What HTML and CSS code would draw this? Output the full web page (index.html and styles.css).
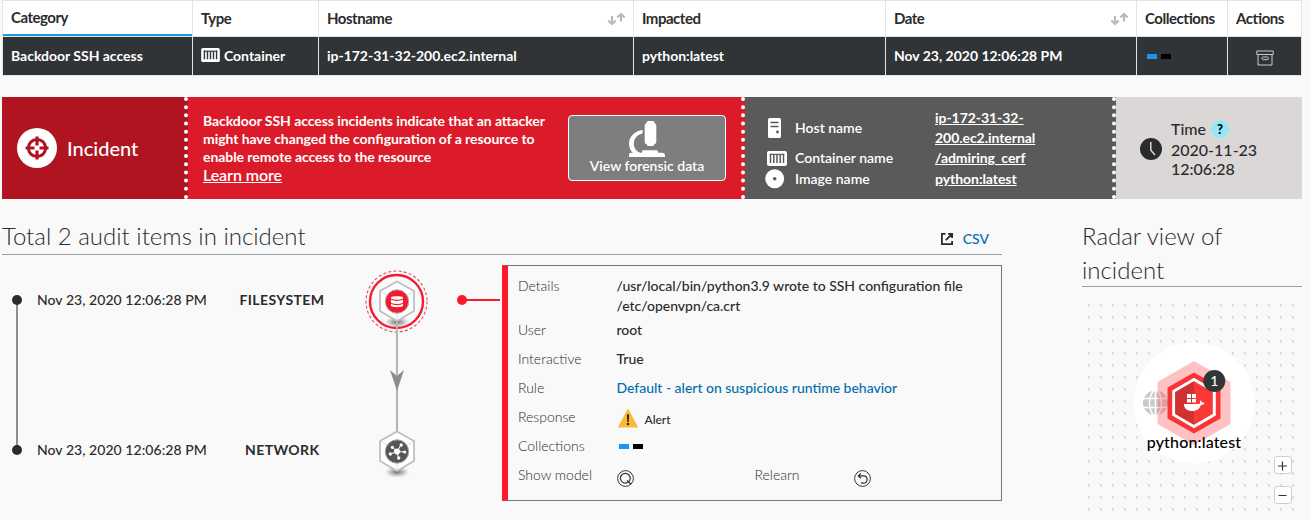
FILE: index.html
```html
<!DOCTYPE html>
<html lang="en">
<head>
<meta charset="utf-8">
<title>Incident</title>
<link rel="stylesheet" href="styles.css">
</head>
<body>
<svg class="defs" width="0" height="0">
  <symbol id="container" viewBox="0 0 20 15">
    <rect x="0" y="0" width="20" height="15" rx="2" fill="#fff"/>
    <path d="M3.500 2.700V12M6.800 3.200V12M10 3.200V12M13.200 3.200V12M16.500 2.700V12" stroke="currentColor" stroke-width="1.500"/>
    <path d="M2.800 3.400H17.200" stroke="currentColor" stroke-width="1.200"/>
  </symbol>
  <symbol id="sort" viewBox="0 0 18 14">
    <path d="M5 4V12M1.300 8.500L5 12L8.700 8.500M14 9.500V2M10.300 5.500L14 2L17.700 5.500" fill="none" stroke="#b9b9b9" stroke-width="2.200"/>
  </symbol>
</svg>

<div class="table">
  <div class="th sorted">Category</div>
  <div class="th">Type</div>
  <div class="th">Hostname<svg class="sort"><use href="#sort"/></svg></div>
  <div class="th">Impacted</div>
  <div class="th">Date<svg class="sort"><use href="#sort"/></svg></div>
  <div class="th">Collections</div>
  <div class="th">Actions</div>
  <div class="td">Backdoor SSH access</div>
  <div class="td"><svg class="type-icon"><use href="#container"/></svg>Container</div>
  <div class="td">ip-172-31-32-200.ec2.internal</div>
  <div class="td">python:latest</div>
  <div class="td">Nov 23, 2020 12:06:28 PM</div>
  <div class="td"><span class="swatches"><i class="blue"></i><i class="black"></i></span></div>
  <div class="td action">
    <svg width="18" height="16" viewBox="0 0 18 16" fill="none" stroke="#c9cacb"><path d="M.8 1H17.200V4.500H.8ZM2 4.500V15H16V4.500"/><rect x="6" y="7" width="6.500" height="2.600" rx="1.300"/></svg>
  </div>
</div>

<div class="banner">
  <div class="kind">
    <svg width="40" height="40" viewBox="0 0 40 40">
      <circle cx="20" cy="20" r="20" fill="#fff"/>
      <circle cx="20" cy="20" r="8.600" fill="none" stroke="#b11421" stroke-width="3"/>
      <path d="M20 8.500V17.500M20 22.500V31.500M8.500 20H17.500M22.500 20H31.500" stroke="#b11421" stroke-width="3.200"/>
    </svg>
    <span>Incident</span>
  </div>
  <div class="about">
    <div class="about-text">
      <p>Backdoor SSH access incidents indicate that an attacker</p>
      <p>might have changed the configuration of a resource to</p>
      <p>enable remote access to the resource</p>
      <a class="learn">Learn more</a>
    </div>
    <div class="forensic">
      <svg width="38" height="37" viewBox="0 0 38 37" fill="#fff">
        <path d="M18 2.500L19.500 0H25.500L27 2.500C28 3 28.300 4 28.300 5V20.500C28.300 22 27.500 23 26 23.500L25.500 25H19.500L19 23.500C17.500 23 16.700 22 16.700 20.500V5C16.700 4 17 3 18 2.500Z"/>
        <path d="M14.500 8.900V12.500C9.500 13.400 5.800 17.500 5.800 22.500C5.800 27 8.700 30.800 13 32H5C2.500 29.800 1 26.500 1 22.500C1 15.500 7 9.500 14.500 8.900Z"/>
        <path d="M1 36V34C1 32.500 2 31.800 3.500 31.800H14V30.700C14 29.800 14.600 29.300 15.500 29.300H28C29.200 29.300 30 29.800 30 31V31.800H34C36 31.800 37 33 37 34.500V36Z"/>
      </svg>
      <span>View forensic data</span>
    </div>
  </div>
  <div class="facts">
    <svg class="host-icon" width="13" height="20" viewBox="0 0 13 20"><rect width="13" height="20" rx="1.500" fill="#fff"/><path d="M2.500 4.500H10.500M2.500 8.500H10.500" stroke="#5a5a5a" stroke-width="1.500"/><circle cx="9.500" cy="14" r="1.400" fill="#5a5a5a"/></svg>
    <span>Host name</span>
    <b>ip-172-31-32-<br>200.ec2.internal</b>
    <svg class="cont-icon"><use href="#container"/></svg>
    <span>Container name</span>
    <b>/admiring_cerf</b>
    <svg width="20" height="20" viewBox="0 0 20 20"><circle cx="9.700" cy="9.700" r="9.500" fill="#fff"/><circle cx="9.700" cy="9.700" r="1.800" fill="#5a5a5a"/></svg>
    <span>Image name</span>
    <b>python:latest</b>
  </div>
  <div class="time">
    <svg width="22" height="22" viewBox="0 0 22 22"><circle cx="11" cy="11" r="11" fill="#2b2b2c"/><path d="M10.800 4V12.300L15 17" fill="none" stroke="#dbd7d6" stroke-width="1.500"/></svg>
    <div class="time-text">
      <div class="time-head"><span>Time</span><span class="help">?</span></div>
      <div>2020-11-23</div>
      <div>12:06:28</div>
    </div>
  </div>
</div>

<div class="main">
  <section class="audit">
    <header class="title">
      <h2>Total 2 audit items in incident</h2>
      <a class="csv"><svg width="12" height="12" viewBox="0 0 12 12" fill="none" stroke="#2b2b2c" stroke-width="1.800"><path d="M4.500 .9H.9V11.100H11.100V8M7 .9H11.100V5M11 1L4.800 7.200"/></svg><span>CSV</span></a>
    </header>
    <div class="audit-body">
      <svg class="spine" width="28" height="200" viewBox="0 0 28 200"><path d="M15 35V185" stroke="#8e8e8e" stroke-width="2"/><circle cx="15" cy="35" r="5" fill="#2b2b2c"/><circle cx="15" cy="185" r="5" fill="#2b2b2c"/></svg>
      <div class="events">
        <div class="event"><span>Nov 23, 2020 12:06:28 PM</span><strong>FILESYSTEM</strong></div>
        <div class="event"><span>Nov 23, 2020 12:06:28 PM</span><strong class="network">NETWORK</strong></div>
      </div>
      <svg class="chain" width="150" height="235" viewBox="350 265 150 235">
        <defs>
          <radialGradient id="shade"><stop offset="0" stop-color="#555" stop-opacity=".85"/><stop offset="1" stop-color="#777" stop-opacity="0"/></radialGradient>
          <g id="hex">
            <ellipse cx="0" cy="20.500" rx="12" ry="5.500" fill="url(#shade)"/>
            <path d="M0-20L17-10.500V9.500L0 19.500L-17 9.500V-10.500Z" fill="#fff" stroke="#bdbdbd" stroke-width="1.700"/>
            <path d="M0 0V19M0 0L-16-10M0 0L16-10" stroke="#ddd"/>
          </g>
        </defs>
        <circle cx="396.500" cy="301.500" r="30.500" fill="none" stroke="#e8495a" stroke-width="1.100" stroke-dasharray="3 2.200"/>
        <circle cx="396.500" cy="301.500" r="26.500" fill="none" stroke="#f31b2f" stroke-width="2.400"/>
        <use href="#hex" x="397" y="301.500"/>
        <path d="M397 322V432" stroke="#b5b5b5" stroke-width="2"/>
        <path d="M390 370L397 376L404 370L397 391Z" fill="#8c8c8c"/>
        <circle cx="397" cy="301.500" r="11.700" fill="#f31b2f" stroke="#aaa" stroke-width="1"/>
        <path d="M391 297.500C391 295.800 403 295.800 403 297.500V305.500C403 307.700 391 307.700 391 305.500Z" fill="#fff"/>
        <path d="M391 299C394 300.800 400 300.800 403 299M391 303.300C394 305 400 305 403 303.300" fill="none" stroke="#f31b2f" stroke-width="1.200"/>
        <use href="#hex" x="397" y="451.500"/>
        <circle cx="397" cy="451.500" r="11.700" fill="#555" stroke="#aaa" stroke-width="1"/>
        <g stroke="#fff" fill="#fff"><path d="M397 451.500L392.500 447.500M397 451.500L401 445M397 451.500L405 452M397 451.500L398.500 458M397 451.500L390.500 454"/><g stroke="none"><circle cx="397" cy="451.500" r="3"/><circle cx="392.300" cy="447.300" r="1.600"/><circle cx="401.200" cy="445" r="1.700"/><circle cx="404.700" cy="452" r="1.600"/><circle cx="398.700" cy="458" r="1.700"/><circle cx="390.300" cy="454" r="1.700"/></g></g>
        <path d="M462 300H500" stroke="#fa1a2c" stroke-width="2"/><circle cx="462" cy="300" r="5" fill="#fa1a2c"/>
      </svg>
      <div class="panel">
        <div class="row tall"><label>Details</label><span>/usr/local/bin/python3.9 wrote to SSH configuration file<br>/etc/openvpn/ca.crt</span></div>
        <div class="row"><label>User</label><span>root</span></div>
        <div class="row"><label>Interactive</label><span>True</span></div>
        <div class="row"><label>Rule</label><a>Default - alert on suspicious runtime behavior</a></div>
        <div class="row"><label>Response</label><span class="alert"><svg width="22" height="20" viewBox="0 0 22 20"><path d="M11 .3L21.200 19.500H.8Z" fill="#fbb934"/><path d="M9.900 6.500H12.100L11.600 14H10.400Z" fill="#222"/><circle cx="11" cy="16" r="1.200" fill="#222"/></svg>Alert</span></div>
        <div class="row"><label>Collections</label><span class="swatches"><i class="blue"></i><i class="black"></i></span></div>
        <div class="row last"><label>Show model</label>
          <svg class="ring" width="17" height="17" viewBox="0 0 17 17" fill="none" stroke="#333"><circle cx="8.500" cy="8.500" r="7.900"/><circle cx="8.300" cy="8.200" r="4.900" stroke-width="1.200"/><path d="M10 10.500L14 14.200" stroke-width="1.300"/></svg>
          <label class="relearn">Relearn</label>
          <svg class="ring" width="17" height="17" viewBox="0 0 17 17" fill="none" stroke="#333"><circle cx="8.500" cy="8.500" r="7.900"/><path d="M6.800 3.500L4.300 5.900L6.800 8.300M4.500 5.900H9.500C14.300 5.900 14.300 13.200 9.500 13.200H7" stroke-width="1.200"/></svg>
        </div>
      </div>
    </div>
  </section>

  <section class="radar">
    <h2>Radar view of<br>incident</h2>
    <svg width="220" height="230" viewBox="1082 287 220 230">
      <defs>
        <pattern id="dots" x="1088" y="304" width="12" height="12" patternUnits="userSpaceOnUse"><rect width="2" height="3" fill="#dedede"/></pattern>
      </defs>
      <rect x="1088" y="304" width="208" height="208" fill="url(#dots)"/>
      <circle cx="1194" cy="403" r="60.500" fill="#fff"/>
      <g transform="translate(1155.500 403)">
        <circle r="12.500" fill="#c9c9c9"/>
        <path d="M-13-4.500H13M-13 4.500H13M0-13V13" stroke="#fff" stroke-width="1.500"/><ellipse rx="6" ry="12.500" fill="none" stroke="#fff" stroke-width="1.500"/>
      </g>
      <path d="M1194 361L1230.500 382V424L1194 445L1157.500 424V382Z" fill="#fb5055" fill-opacity=".35"/>
      <path d="M1194 372.500L1220.500 387.500V418.500L1194 433.500L1167.500 418.500V387.500Z" fill="#f93436"/>
      <path d="M1194 379.500L1214.300 391.300V414.700L1194 426.500L1173.700 414.700V391.300Z" fill="#fb3838" stroke="#fff" stroke-width="3"/>
      <path d="M1194 381.300V424.700L1175.200 413.800V392.200Z" fill="#d03232"/>
      <path d="M1187 394H1191V398H1187ZM1192 394H1196V398H1192ZM1187 399H1191V402.500H1187ZM1192 399H1196V402.500H1192ZM1184 404H1199.500C1200.500 403 1200.200 401.500 1199.800 400.300C1201.200 400.900 1201.800 401.800 1202 402.600C1203 402.500 1204 402.700 1204.500 403C1203.800 404.600 1202.400 405 1201 405C1199.500 408.800 1197 411 1192.500 411C1187 411 1184 408.500 1184 404Z" fill="#fff"/>
      <circle cx="1214.300" cy="381" r="11" fill="#303538"/>
      <text class="count" x="1214.300" y="386">1</text>
      <text class="node" x="1194" y="448">python:latest</text>
      <rect x="1274.500" y="456.500" width="17" height="17" rx="3" fill="#fff" stroke="#ccc"/>
      <rect x="1274.500" y="486.500" width="17" height="17" rx="3" fill="#fff" stroke="#ccc"/>
      <path d="M1278 466H1287M1282.500 461.500V470.500M1278.500 495.500H1286.500" stroke="#333" stroke-width="1.200"/>
    </svg>
  </section>
</div>
</body>
</html>
```
FILE: styles.css
```css
* { box-sizing: border-box; }
body {
  margin: 0;
  padding: 0 8px 0 2px;
  background: #f9f9f9;
  color: #2b2b2c;
  font-family: Lato, sans-serif;
  font-size: 14px;
  font-feature-settings: "liga" 1;
}
.defs { display: block; }
svg { display: block; flex: none; }
h2, p { margin: 0; }

.table {
  display: grid;
  grid-template-columns: 190px 126px 315px 252px 251px 91px 74px;
  grid-template-rows: 36px 39px;
  border: solid #e4e4e4;
  border-width: 1px 0 0 1px;
}
.th, .td {
  display: flex;
  align-items: center;
  padding-left: 8px;
  border-right: 1px solid #e4e4e4;
  border-bottom: 1px solid #e4e4e4;
  font-weight: 700;
  white-space: nowrap;
}
.th { padding-bottom: 1px; background: #fff; font-size: 15px; letter-spacing: -0.48px; }
.th.sorted { box-shadow: inset 0 -2px #1f98dd; padding-bottom: 3px; }
.td { padding-bottom: 2px; background: #303437; color: #fff; letter-spacing: -0.02px; }
.sort { width: 18px; height: 14px; margin: 1px 8px 0 auto; }
.type-icon { width: 19px; height: 14px; margin-right: 4px; color: #303437; }
.action { justify-content: center; padding: 4px 0 0; }
.swatches { display: flex; gap: 4px; padding-left: 2px; }
.td .swatches { padding-top: 2px; }
.swatches i { width: 10px; height: 5px; }
.blue { background: #1b95f0; }
.black { background: #000; }

.banner {
  display: grid;
  grid-template-columns: 186px 557px 371px 186px;
  height: 102px;
  margin-top: 21px;
  color: #fff;
}
.kind, .about, .facts { border-right: 4px dotted #fff; }
.kind {
  display: flex;
  align-items: center;
  gap: 10px;
  padding-left: 15px;
  background: #b11421;
  font-size: 20px;
  font-weight: 500;
}
.about {
  display: flex;
  justify-content: space-between;
  padding: 15px 15px 0;
  background: #db1b29;
  font-weight: 700;
}
.about-text { line-height: 18px; white-space: nowrap; letter-spacing: -0.07px; }
.learn { font-size: 16px; font-weight: 600; text-decoration: underline; }
.forensic {
  display: flex;
  flex-direction: column;
  align-items: center;
  width: 158px;
  height: 66px;
  margin-top: 3px;
  padding-top: 5px;
  border: 1px solid #fff;
  border-radius: 4px;
  background: #7e7e7e;
  font-weight: 600;
  line-height: 16px;
}
.facts {
  display: grid;
  grid-template-columns: 20px 130px auto;
  grid-template-rows: 40px 20px 21px;
  column-gap: 10px;
  align-items: center;
  align-content: start;
  justify-items: start;
  padding: 11px 0 0 20px;
  background: #5a5a5a;
  font-weight: 600;
  line-height: 20px;
}
.facts b { text-decoration: underline; font-weight: 700; letter-spacing: -0.05px; }
.host-icon { margin-left: 3px; }
.cont-icon { width: 20px; height: 15px; margin-left: 2px; color: #5a5a5a; }
.time {
  display: flex;
  align-items: center;
  gap: 9px;
  padding: 0 0 0 24px;
  background: #dbd7d6;
  color: #2b2b2c;
  font-size: 16px;
  font-weight: 500;
  line-height: 19px;
}
.time > svg { margin-top: 2px; }
.time-head { display: flex; align-items: flex-start; gap: 5px; height: 22px; padding-top: 1px; }
.help {
  width: 18px;
  height: 18px;
  margin-top: 1px;
  border-radius: 50%;
  background: #92e8f5;
  color: #000;
  font-size: 13px;
  font-weight: 900;
  line-height: 18px;
  text-align: center;
}

.main {
  display: grid;
  grid-template-columns: 1000px 220px;
  justify-content: space-between;
  padding-top: 20px;
}
h2 { font-size: 24px; font-weight: 300; line-height: 34px; white-space: nowrap; }
.title {
  display: flex;
  justify-content: space-between;
  height: 36px;
  border-bottom: 1px solid #95a5a8;
}
.csv { display: flex; align-items: center; gap: 10px; padding: 5px 13px 0 0; color: #006fae; font-weight: 500; }
.csv span { padding-bottom: 2px; }
.audit-body { display: flex; padding-top: 10px; }
.events { display: flex; flex-direction: column; gap: 130px; width: 320px; padding: 25px 0 0 7px; font-weight: 500; }
.event { display: flex; height: 20px; line-height: 20px; white-space: nowrap; }
.event span { width: 202.500px; letter-spacing: 0.05px; }
.event strong { font-weight: 700; letter-spacing: 0.4px; }
.event .network { padding-left: 5.500px; }
.panel {
  width: 500px;
  height: 236px;
  margin-left: 2px;
  padding: 10px 0 0 10px;
  border: 1px solid #777;
  border-left: 6px solid #fa1a2c;
  line-height: 20px;
  font-weight: 500;
}
.row { display: flex; height: 29px; white-space: nowrap; letter-spacing: -0.02px; }
.row.tall { height: 44px; }
.row label { width: 98.500px; font-weight: 300; }
.row a { color: #006fae; }
.alert { display: flex; gap: 6px; padding-top: 1px; font-size: 12px; line-height: 24px; }
.row .swatches { padding-top: 8px; }
.row.last { height: 22px; }
.ring { margin-top: 5px; }
.row .relearn { width: 99px; margin-left: 121px; }
.radar h2 { height: 68px; border-bottom: 1px solid #95a5a8; }
.count, .node { text-anchor: middle; font-family: Lato, sans-serif; font-weight: 500; }
.count { font-size: 14px; fill: #fff; }
.node { font-size: 16px; letter-spacing: 0.15px; fill: #000; }
```
